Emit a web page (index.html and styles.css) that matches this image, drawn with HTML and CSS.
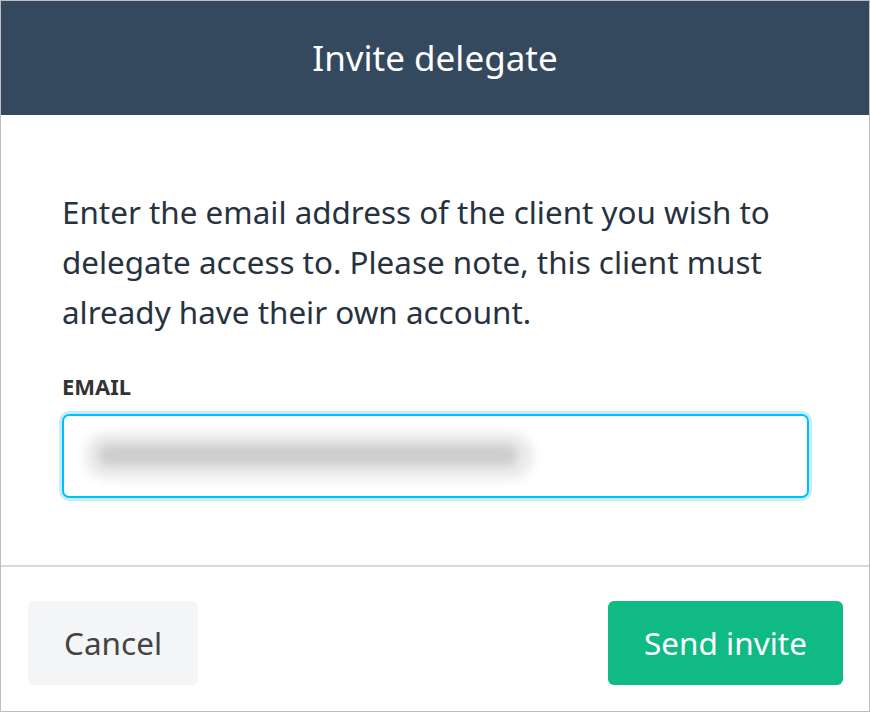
FILE: index.html
```html
<!DOCTYPE html>
<html>
<head>
<meta charset="utf-8">
<link rel="stylesheet" href="styles.css">
</head>
<body>
<div class="modal">
  <div class="header">Invite delegate</div>
  <div class="content">
    <p class="intro">Enter the email address of the client you wish to delegate access to. Please note, this client must already have their own account.</p>
    <label class="label">EMAIL</label>
    <div class="input">
      <div class="halo"></div>
      <div class="blur"></div>
    </div>
  </div>
  <div class="footer">
    <button class="btn cancel">Cancel</button>
    <button class="btn send">Send invite</button>
  </div>
</div>
</body>
</html>
```
FILE: styles.css
```css
html, body {
  margin: 0;
  padding: 0;
  background: #fff;
}
body {
  font-family: "Noto Sans", "Open Sans", sans-serif;
}
.modal {
  box-sizing: border-box;
  width: 870px;
  height: 712px;
  border: 1px solid #bdbdbd;
  display: flex;
  flex-direction: column;
}
.header {
  height: 114px;
  background: #34495e;
  color: #fff;
  font-size: 35px;
  display: flex;
  align-items: center;
  justify-content: center;
  padding-bottom: 2px;
  box-sizing: border-box;
}
.content {
  padding: 0 60px 0 61px;
  height: 452px;
  box-sizing: border-box;
  border-bottom: 2px solid #d9d9d9;
}
.intro {
  margin: 72px 0 0 0;
  font-size: 31.4px;
  line-height: 50px;
  color: #27323f;
}
.label {
  display: block;
  margin-top: 34px;
  font-size: 22px;
  line-height: 30px;
  font-weight: 700;
  color: #333;
}
.input {
  margin-top: 13px;
  height: 84px;
  box-sizing: border-box;
  border: 2px solid #00bfff;
  border-radius: 7px;
  box-shadow: 0 0 0 3px #c4efff;
  position: relative;
  overflow: hidden;
}
.halo {
  position: absolute;
  left: 20px;
  top: 16px;
  width: 450px;
  height: 48px;
  background: #ececec;
  border-radius: 24px;
  filter: blur(5px);
}
.blur {
  position: absolute;
  left: 34px;
  top: 28px;
  width: 420px;
  height: 22px;
  background: #cdcdcd;
  border-radius: 11px;
  filter: blur(5px);
}
.footer {
  flex: 1;
  display: flex;
  justify-content: space-between;
  align-items: flex-start;
  padding: 34px 26px 0 27px;
}
.btn {
  font-family: "Noto Sans", "Open Sans", sans-serif;
  font-size: 31.5px;
  height: 84px;
  border: none;
  border-radius: 6px;
  padding: 0 0 0 0;
  line-height: 84px;
}
.cancel {
  background: #f4f5f7;
  color: #444;
  width: 170px;
}
.send {
  background: #10ba84;
  color: #fff;
  width: 235px;
}
```
